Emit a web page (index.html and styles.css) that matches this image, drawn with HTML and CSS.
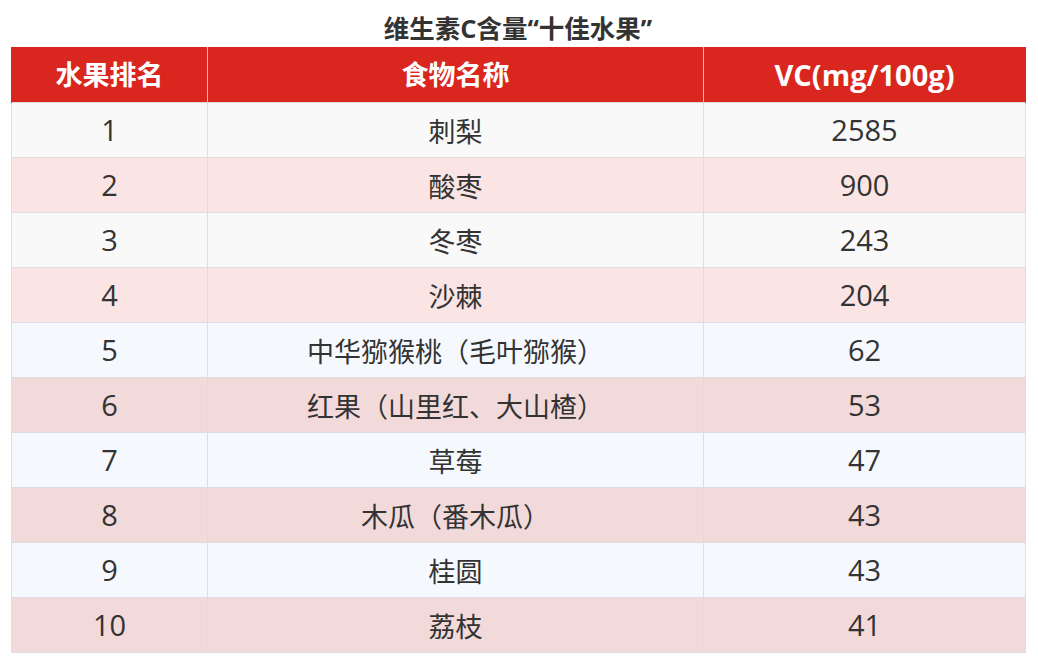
FILE: index.html
```html
<!DOCTYPE html>
<html lang="zh">
<head>
<meta charset="utf-8">
<title>维生素C含量“十佳水果”</title>
<link rel="stylesheet" href="styles.css">
</head>
<body>
<div class="page">
  <h1 class="title">维生素C含量“十佳水果”</h1>
  <table class="vc-table">
    <colgroup>
      <col class="c-rank">
      <col class="c-name">
      <col class="c-vc">
    </colgroup>
    <thead>
      <tr><th>水果排名</th><th>食物名称</th><th class="num">VC(mg/100g)</th></tr>
    </thead>
    <tbody>
      <tr class="r-gray"><td class="num">1</td><td class="cjk">刺梨</td><td class="num">2585</td></tr>
      <tr class="r-pink"><td class="num">2</td><td class="cjk">酸枣</td><td class="num">900</td></tr>
      <tr class="r-gray"><td class="num">3</td><td class="cjk">冬枣</td><td class="num">243</td></tr>
      <tr class="r-pink"><td class="num">4</td><td class="cjk">沙棘</td><td class="num">204</td></tr>
      <tr class="r-blue"><td class="num">5</td><td class="cjk">中华猕猴桃（毛叶猕猴）</td><td class="num">62</td></tr>
      <tr class="r-rose"><td class="num">6</td><td class="cjk">红果（山里红、大山楂）</td><td class="num">53</td></tr>
      <tr class="r-blue"><td class="num">7</td><td class="cjk">草莓</td><td class="num">47</td></tr>
      <tr class="r-rose"><td class="num">8</td><td class="cjk">木瓜（番木瓜）</td><td class="num">43</td></tr>
      <tr class="r-blue"><td class="num">9</td><td class="cjk">桂圆</td><td class="num">43</td></tr>
      <tr class="r-rose"><td class="num">10</td><td class="cjk">荔枝</td><td class="num">41</td></tr>
    </tbody>
  </table>
</div>
</body>
</html>
```
FILE: styles.css
```css
html, body {
  margin: 0;
  padding: 0;
  background: #ffffff;
}
.page {
  padding: 0 0 0 11px;
  width: 1014px;
  font-family: "Open Sans", "Noto Sans CJK SC", sans-serif;
  color: #333333;
}
.title {
  margin: 0;
  height: 47px;
  line-height: 56px;
  font-size: 25.5px;
  font-weight: 700;
  text-align: center;
  color: #333333;
  font-family: "Open Sans", "Noto Sans CJK SC", sans-serif;
}
.vc-table {
  width: 1014px;
  border-collapse: collapse;
  table-layout: fixed;
}
.c-rank { width: 196px; }
.c-name { width: 496px; }
.c-vc { width: 322px; }
.vc-table th {
  background: #d9261f;
  color: #ffffff;
  font-size: 27px;
  font-weight: 700;
  height: 55px;
  line-height: 30px;
  padding: 0;
  border-left: 1px solid #f1b5b3;
  border-right: 1px solid #f1b5b3;
}
.vc-table th:first-child { border-left: 1px solid #d9261f; }
.vc-table th:last-child { border-right: 1px solid #d9261f; }
.vc-table td {
  height: 54px;
  line-height: 30px;
  padding: 0;
  text-align: center;
  font-size: 27px;
  border: 1px solid #dedede;
  color: #333333;
}
.vc-table td.cjk { padding-top: 3px; height: 51px; }
.vc-table .num { font-size: 29px; }
.r-gray td { background: #f9f9f9; }
.r-pink td { background: #fbe4e4; }
.r-blue td { background: #f5f9fd; }
.r-rose td { background: #f2dada; }
```
